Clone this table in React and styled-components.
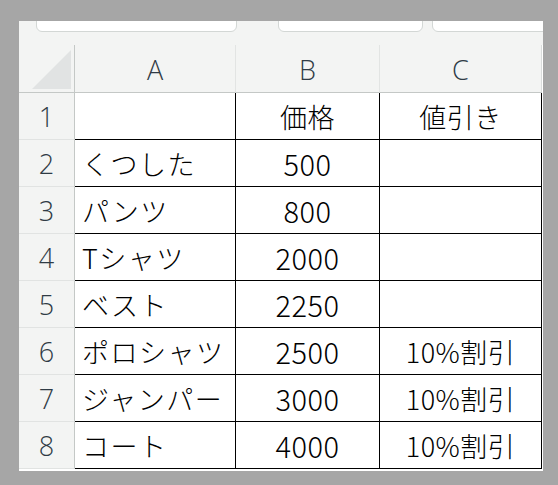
import styled, { createGlobalStyle } from 'styled-components'

const GlobalStyle = createGlobalStyle`
    html, body {
        margin: 0;
        padding: 0;
        background: #a6a6a6;
    }
`

const Page = styled.div`
    width: 558px;
    height: 485px;
    padding: 21px 0 0 19px;
    box-sizing: border-box;
    background: #a6a6a6;
`

const Sheet = styled.div`
    width: 524px;
    height: 450px;
    background: #ffffff;
    display: flex;
    flex-direction: column;
    overflow: hidden;
`

const Toolbar = styled.div`
    height: 24px;
    flex: none;
    background: #f3f4f3;
    display: flex;
    align-items: flex-start;
    padding-left: 17px;
    overflow: hidden;
`

const InputBox = styled.div`
    flex: none;
    width: ${p => p.$w}px;
    height: 24px;
    margin-top: -13px;
    margin-left: ${p => p.$gap || 0}px;
    background: #ffffff;
    border: 1px solid #d3d7d5;
    border-radius: 6px;
    box-sizing: border-box;
`

const Grid = styled.div`
    display: grid;
    grid-template-columns: 56px 161px 144px 162px;
    grid-template-rows: 48px repeat(8, 47px);
    font-family: "Noto Sans CJK JP", "Noto Sans", sans-serif;
`

const Corner = styled.div`
    background: #f3f4f3;
    border-right: 1px solid #c4c8c6;
    border-bottom: 1px solid #c4c8c6;
    display: flex;
    align-items: flex-end;
    justify-content: flex-end;
    padding: 0 3px 3px 0;
`

const CornerMark = styled.div`
    width: 39px;
    height: 39px;
    background: #e1e3e3;
    clip-path: polygon(100% 0, 100% 100%, 0 100%);
`

const ColHead = styled.div`
    background: #f3f4f3;
    border-bottom: 1px solid #c4c8c6;
    border-right: 1px solid ${p => (p.$last ? '#d9dcdb' : '#e2e4e3')};
    display: flex;
    align-items: center;
    justify-content: center;
    font-family: "Open Sans", "Noto Sans", sans-serif;
    font-weight: 300;
    font-size: 27px;
    color: #2f3b45;
    padding-top: 2px;
`

const RowHead = styled.div`
    background: #f3f4f3;
    border-right: 1px solid #c4c8c6;
    border-bottom: 1px solid #e1e3e2;
    display: flex;
    align-items: center;
    justify-content: center;
    font-family: "Open Sans", "Noto Sans", sans-serif;
    font-weight: 300;
    font-size: 27px;
    color: #2f3b45;
`

const Cell = styled.div`
    border-right: 1px solid #000;
    border-bottom: 1px solid #000;
    display: flex;
    align-items: center;
    justify-content: ${p => (p.$center ? 'center' : 'flex-start')};
    padding-left: ${p => (p.$center ? 0 : 7)}px;
    font-size: ${p => p.$size || 27}px;
    font-weight: 300;
    letter-spacing: ${p => (p.$center ? 0.5 : 1.5)}px;
    color: #000;
    white-space: nowrap;
`

const rows = [
    ['', '価格', '値引き'],
    ['くつした', '500', ''],
    ['パンツ', '800', ''],
    ['Tシャツ', '2000', ''],
    ['ベスト', '2250', ''],
    ['ポロシャツ', '2500', '10%割引'],
    ['ジャンパー', '3000', '10%割引'],
    ['コート', '4000', '10%割引'],
]

export default function App() {
    return (
        <Page>
            <GlobalStyle />
            <Sheet>
                <Toolbar>
                    <InputBox $w={201} />
                    <InputBox $w={145} $gap={41} />
                    <InputBox $w={140} $gap={9} />
                </Toolbar>
                <Grid>
                    <Corner><CornerMark /></Corner>
                    <ColHead>A</ColHead>
                    <ColHead>B</ColHead>
                    <ColHead $last>C</ColHead>
                    {rows.map((r, i) => [
                        <RowHead key={`h${i}`}>{i + 1}</RowHead>,
                        <Cell key={`a${i}`}>{r[0]}</Cell>,
                        <Cell key={`b${i}`} $center $size={i === 0 ? 27 : 29}>{r[1]}</Cell>,
                        <Cell key={`c${i}`} $center>{r[2]}</Cell>,
                    ])}
                </Grid>
            </Sheet>
        </Page>
    )
}
